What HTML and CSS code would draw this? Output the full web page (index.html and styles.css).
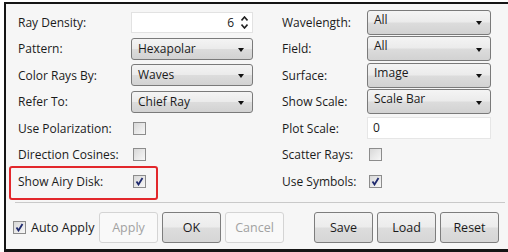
FILE: index.html
```html
<!DOCTYPE html>
<html lang="en">
<head>
    <meta charset="UTF-8">
    <title>Spot Diagram Settings</title>
    <link rel="stylesheet" href="styles.css">
</head>
<body>
<div class="dialog">
    <div class="settings">
        <label class="lbl">Ray Density:</label>
        <div class="spin"><span class="spin-val">6</span>
            <span class="spin-arrows">
                <svg width="7" height="5" viewBox="0 0 7 5"><path d="M0.5 4.5 L3.5 1 L6.5 4.5" fill="none" stroke="#222" stroke-width="1.6"/></svg>
                <svg width="7" height="5" viewBox="0 0 7 5"><path d="M0.5 0.5 L3.5 4 L6.5 0.5" fill="none" stroke="#222" stroke-width="1.6"/></svg>
            </span>
        </div>
        <span class="gapcol"></span>
        <label class="lbl">Wavelength:</label>
        <div class="drop tall">All<i class="arrow"></i></div>

        <label class="lbl">Pattern:</label>
        <div class="drop">Hexapolar<i class="arrow"></i></div>
        <span class="gapcol"></span>
        <label class="lbl">Field:</label>
        <div class="drop tall">All<i class="arrow"></i></div>

        <label class="lbl">Color Rays By:</label>
        <div class="drop">Waves<i class="arrow"></i></div>
        <span class="gapcol"></span>
        <label class="lbl">Surface:</label>
        <div class="drop tall">Image<i class="arrow"></i></div>

        <label class="lbl">Refer To:</label>
        <div class="drop">Chief Ray<i class="arrow"></i></div>
        <span class="gapcol"></span>
        <label class="lbl">Show Scale:</label>
        <div class="drop tall">Scale Bar<i class="arrow"></i></div>

        <label class="lbl">Use Polarization:</label>
        <div class="cell"><span class="check"></span></div>
        <span class="gapcol"></span>
        <label class="lbl">Plot Scale:</label>
        <div class="field">0</div>

        <label class="lbl">Direction Cosines:</label>
        <div class="cell"><span class="check"></span></div>
        <span class="gapcol"></span>
        <label class="lbl">Scatter Rays:</label>
        <div class="cell"><span class="check"></span></div>

        <label class="lbl">Show Airy Disk:</label>
        <div class="cell"><span class="check on"><svg width="9" height="9" viewBox="0 0 9 9"><path d="M1.5 4.5 L3.5 7.5 L7.5 1" fill="none" stroke="#1f2a6e" stroke-width="1.8"/></svg></span></div>
        <span class="gapcol"></span>
        <label class="lbl">Use Symbols:</label>
        <div class="cell"><span class="check on"><svg width="9" height="9" viewBox="0 0 9 9"><path d="M1.5 4.5 L3.5 7.5 L7.5 1" fill="none" stroke="#1f2a6e" stroke-width="1.8"/></svg></span></div>

        <div class="highlight"></div>
    </div>

    <div class="separator"></div>

    <div class="actions">
        <div class="auto-apply"><span class="check on"><svg width="9" height="9" viewBox="0 0 9 9"><path d="M1.5 4.5 L3.5 7.5 L7.5 1" fill="none" stroke="#1f2a6e" stroke-width="1.8"/></svg></span>Auto Apply</div>
        <button class="btn" disabled>Apply</button>
        <button class="btn">OK</button>
        <button class="btn" disabled>Cancel</button>
        <span class="spacer"></span>
        <button class="btn">Save</button>
        <button class="btn">Load</button>
        <button class="btn">Reset</button>
    </div>
</div>
</body>
</html>
```

FILE: styles.css
```css
html, body {
    margin: 0;
    padding: 0;
    background: #fff;
}
* {
    box-sizing: border-box;
}
body {
    font-family: "Open Sans", "Noto Sans", sans-serif;
    font-size: 12px;
    color: #1b1b1b;
}
.dialog {
    margin: 2px 0 0 4px;
    height: 250px;
    border-top: 2px solid #151515;
    border-left: 2px solid #151515;
    border-bottom: 3px solid #151515;
    background: #f6f6f6;
    padding: 5px 9px 0 7px;
}
.settings {
    position: relative;
    margin-left: 5px;
    display: grid;
    grid-template-columns: 113px 122px 29px 85px 124px;
    grid-auto-rows: 26.5px;
    align-items: center;
}
.lbl {
    white-space: nowrap;
}
.drop {
    position: relative;
    height: 22px;
    line-height: 20px;
    padding-left: 6px;
    border: 1px solid #7a7a7a;
    border-radius: 3px;
    background: linear-gradient(#f4f4f4, #ebebeb 48%, #dcdcdc 52%, #d2d2d2);
}
.drop.tall {
    height: 25px;
    line-height: 17px;
}
.arrow {
    position: absolute;
    right: 8px;
    top: 50%;
    margin-top: -1px;
    border-left: 3.5px solid transparent;
    border-right: 3.5px solid transparent;
    border-top: 4px solid #111;
}
.spin {
    height: 21px;
    background: #fff;
    border: 1px solid #e2e2e2;
    display: flex;
    align-items: center;
    justify-content: flex-end;
    padding-right: 4px;
}
.spin-val {
    margin-right: 7px;
}
.spin-arrows {
    display: flex;
    flex-direction: column;
    gap: 3px;
}
.spin-arrows svg {
    display: block;
}
.field {
    height: 22px;
    line-height: 20px;
    background: #fff;
    border: 1px solid #e6e6e6;
    padding-left: 5px;
}
.cell {
    display: flex;
    align-items: center;
    padding-left: 2px;
}
.check {
    width: 13px;
    height: 13px;
    border: 1px solid #8c8c8c;
    background: linear-gradient(135deg, #d8d8d8, #f7f7f7);
    display: inline-flex;
    align-items: center;
    justify-content: center;
}
.check svg {
    display: block;
}
.highlight {
    position: absolute;
    left: -9px;
    top: 157px;
    width: 149px;
    height: 34px;
    border: 2px solid #e2272b;
    border-radius: 3px;
}
.separator {
    margin: 7px 0 0 2px;
    border-top: 1px solid #c9c9c9;
    width: 490px;
}
.actions {
    display: flex;
    align-items: center;
    gap: 4px;
    margin-top: 9px;
}
.auto-apply {
    width: 82px;
    display: flex;
    align-items: center;
    gap: 5px;
    font-size: 12.5px;
}
.spacer {
    width: 22px;
}
.btn {
    width: 59px;
    height: 31px;
    font-family: inherit;
    font-size: 12.5px;
    color: #1b1b1b;
    border: 1px solid #7d7d7d;
    border-radius: 3px;
    background: linear-gradient(#f3f3f3, #ececec 48%, #dddddd 52%, #d6d6d6);
    padding: 0;
}
.btn:disabled {
    color: #a2a2a2;
    border-color: #d4d4d4;
    background: #f9f9f9;
}
```
